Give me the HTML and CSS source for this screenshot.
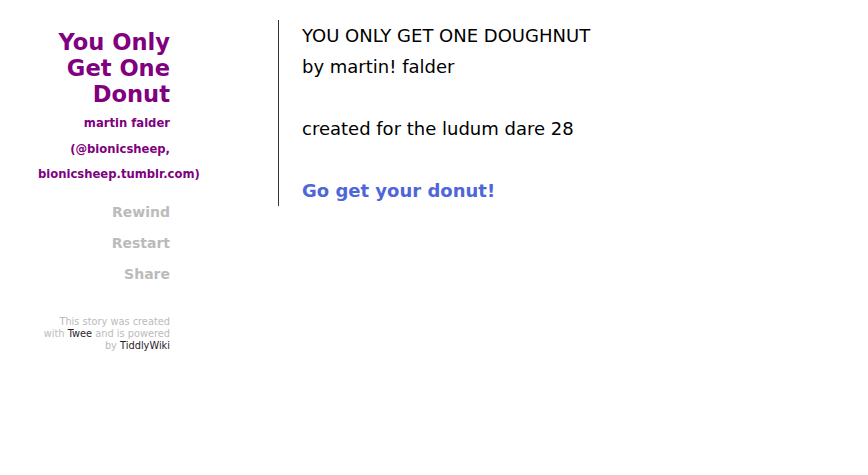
FILE: index.html
```html
<!DOCTYPE html>
<html>
<head>
<meta charset="utf-8">
<title>You Only Get One Donut</title>
<link rel="stylesheet" href="styles.css">
</head>
<body>
<div class="page">
  <div class="sidebar">
    <h1 class="title">You Only Get One Donut</h1>
    <div class="author">martin falder<br>(@bionicsheep,<br>bionicsheep.tumblr.com)</div>
    <ul class="menu">
      <li>Rewind</li>
      <li>Restart</li>
      <li>Share</li>
    </ul>
    <p class="credits">This story was created with <a href="#">Twee</a> and is powered by <a href="#">TiddlyWiki</a></p>
  </div>
  <div class="passages">
    <div class="passage">
      <div>YOU ONLY GET ONE DOUGHNUT</div>
      <div>by martin! falder</div>
      <div>&nbsp;</div>
      <div>created for the ludum dare 28</div>
      <div>&nbsp;</div>
      <div><a class="internal" href="#">Go get your donut!</a></div>
    </div>
  </div>
</div>
</body>
</html>
```

FILE: styles.css
```css
html, body {
  margin: 0;
  padding: 0;
  background: #fff;
}
body {
  font-family: "DejaVu Sans", Verdana, sans-serif;
  color: #000;
}
.page {
  display: flex;
  align-items: flex-start;
}
.sidebar {
  margin-left: 38px;
  width: 132px;
  text-align: right;
  padding-top: 29px;
}
.title {
  margin: 0;
  font-size: 22.6px;
  line-height: 26px;
  font-weight: bold;
  color: #800080;
  padding-left: 10px;
}
.author {
  margin-top: 4px;
  font-size: 11.6px;
  font-weight: bold;
  line-height: 25.5px;
  color: #800080;
  white-space: nowrap;
}
.menu {
  list-style: none;
  margin: 9px 0 0 0;
  padding: 0;
}
.menu li {
  font-size: 14px;
  font-weight: bold;
  color: #bbb;
  line-height: 31px;
}
.credits {
  margin: 26px 0 0 0;
  font-size: 9.8px;
  line-height: 12px;
  color: #bbb;
}
.credits a {
  color: #2a1a2a;
  text-decoration: none;
}
.passages {
  margin-left: 108px;
  margin-top: 20px;
  border-left: 1px solid #333;
  padding-left: 23px;
}
.passage {
  font-size: 18px;
  line-height: 31px;
}
.internal {
  color: #4f66d9;
  font-weight: bold;
  text-decoration: none;
}
```
